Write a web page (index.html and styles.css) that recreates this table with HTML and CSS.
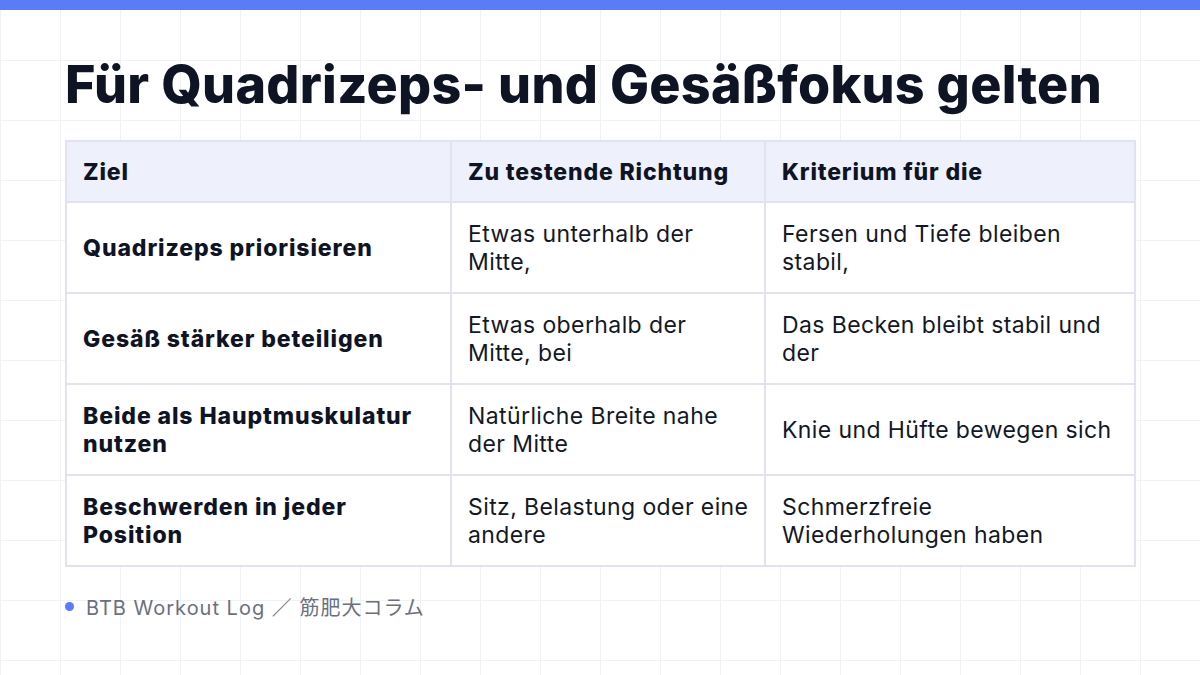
FILE: index.html
```html
<!DOCTYPE html>
<html lang="de">
<head>
<meta charset="utf-8">
<link rel="stylesheet" href="styles.css">
</head>
<body>
<div class="topbar"></div>
<main class="slide">
  <h1 class="title">Für Quadrizeps- und Gesäßfokus gelten</h1>
  <table class="grid-table">
    <colgroup>
      <col class="c1"><col class="c2"><col class="c3">
    </colgroup>
    <thead>
      <tr><th>Ziel</th><th>Zu testende Richtung</th><th>Kriterium für die</th></tr>
    </thead>
    <tbody>
      <tr><td class="goal">Quadrizeps priorisieren</td><td>Etwas unterhalb der<br>Mitte,</td><td>Fersen und Tiefe bleiben<br>stabil,</td></tr>
      <tr><td class="goal">Gesäß stärker beteiligen</td><td>Etwas oberhalb der<br>Mitte, bei</td><td>Das Becken bleibt stabil und<br>der</td></tr>
      <tr><td class="goal">Beide als Hauptmuskulatur<br>nutzen</td><td>Natürliche Breite nahe<br>der Mitte</td><td>Knie und Hüfte bewegen sich</td></tr>
      <tr><td class="goal">Beschwerden in jeder<br>Position</td><td>Sitz, Belastung oder eine<br>andere</td><td>Schmerzfreie<br>Wiederholungen haben</td></tr>
    </tbody>
  </table>
  <footer class="footer"><span class="dot"></span><span class="src">BTB Workout Log ／ 筋肥大コラム</span></footer>
</main>
</body>
</html>
```

FILE: styles.css
```css
html, body {
  margin: 0;
  padding: 0;
}
body {
  width: 1200px;
  height: 675px;
  overflow: hidden;
  background-color: #ffffff;
  background-image:
    linear-gradient(to right, #f1f2f7 1px, transparent 1px),
    linear-gradient(to bottom, #f1f2f7 1px, transparent 1px);
  background-size: 60px 60px;
  background-position: 0 0;
  font-family: "Inter", "Noto Sans CJK JP", sans-serif;
  color: #111827;
}
.topbar {
  height: 10px;
  background: #5b7cf6;
}
.slide {
  padding: 0 65px;
}
.title {
  margin: 0;
  padding-top: 45px;
  height: 85px;
  font-family: "Inter", sans-serif;
  font-weight: 800;
  font-size: 52px;
  line-height: 60px;
  letter-spacing: 0.3px;
  color: #0f1424;
  white-space: nowrap;
}
.grid-table {
  width: 1069px;
  border-collapse: collapse;
  table-layout: fixed;
  background: #ffffff;
  font-family: "Inter", "Noto Sans CJK JP", sans-serif;
  font-size: 23px;
  line-height: 28px;
  letter-spacing: 0.4px;
}
.c1 { width: 385px; }
.c2 { width: 314px; }
.c3 { width: 370px; }
.grid-table th,
.grid-table td {
  border: 2px solid #e1e4f0;
  padding: 0 14px 0 16px;
  text-align: left;
  vertical-align: middle;
  white-space: nowrap;
}
.grid-table th {
  height: 59px;
  background: #eef0fb;
  font-weight: 800;
  letter-spacing: 0.85px;
  color: #0f1424;
}
.grid-table td {
  height: 89px;
  font-weight: 400;
  color: #131826;
}
.grid-table td.goal {
  font-weight: 800;
  letter-spacing: 0.9px;
  color: #0f1424;
}
.footer {
  display: flex;
  align-items: center;
  gap: 12px;
  margin-top: 25px;
  font-size: 20px;
  color: #6b7080;
}
.dot {
  width: 9px;
  height: 9px;
  border-radius: 50%;
  background: #5b7cf6;
}
.src {
  font-family: "Inter", "Noto Sans CJK JP", sans-serif;
  letter-spacing: 1px;
}
```
